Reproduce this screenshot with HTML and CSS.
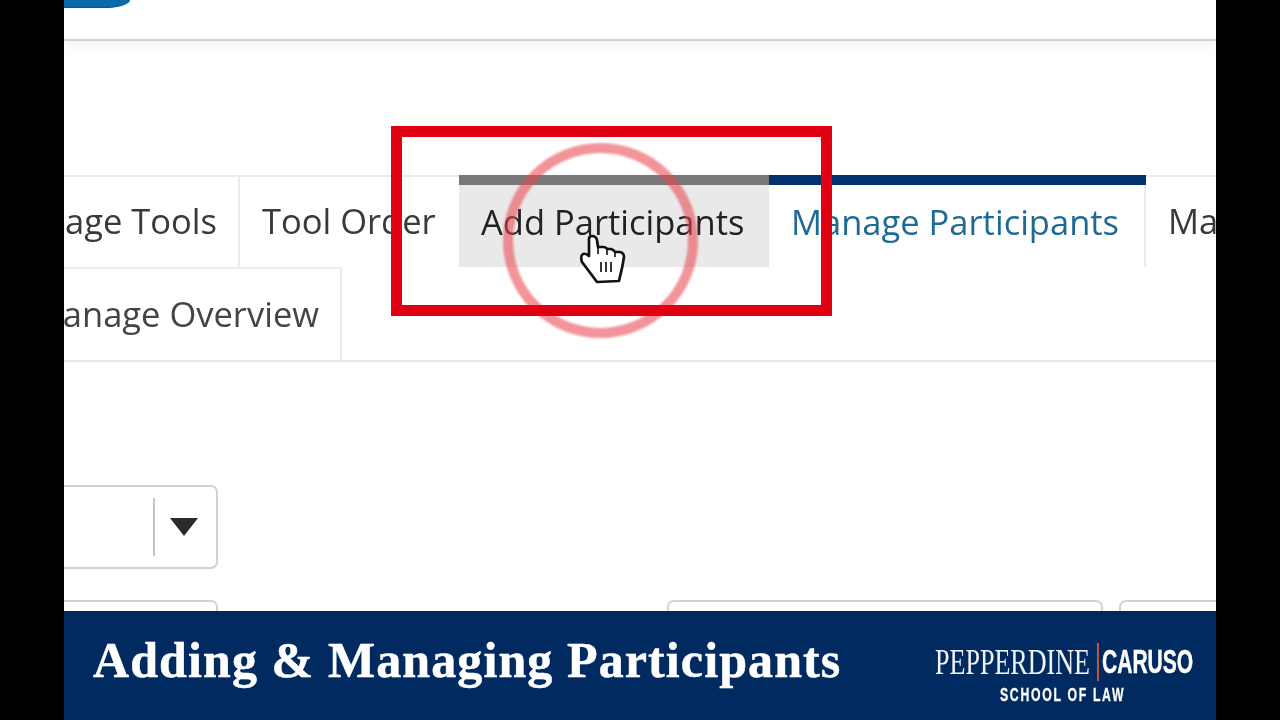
FILE: index.html
```html
<!DOCTYPE html>
<html lang="en">
<head>
<meta charset="utf-8">
<title>Adding &amp; Managing Participants</title>
<link rel="stylesheet" href="styles.css">
</head>
<body>
<div class="stage">
  <header class="topbar"><div class="pill"></div></header>
  <main class="content">
    <nav class="tabs">
      <div class="tab-row">
        <div class="tab tab-clip tab-clip-1"><span>Manage Tools</span></div>
        <div class="tab tab-order">Tool Order</div>
        <div class="tab tab-hover">Add Participants</div>
        <div class="tab tab-active">Manage Participants</div>
        <div class="tab tab-open">Ma</div>
      </div>
      <div class="tab-row tab-row-2">
        <div class="tab tab-clip tab-clip-2"><span>Manage Overview</span></div>
      </div>
    </nav>
    <div class="select"><div class="select-sep"></div><div class="caret"></div></div>
    <div class="cards">
      <div class="card card-a"></div>
      <div class="card card-b"></div>
      <div class="card card-c"></div>
    </div>
  </main>
  <footer class="banner">
    <h1 class="title">Adding &amp; Managing Participants</h1>
    <div class="logo">
      <div class="logo-top">
        <span class="logo-pep">PEPPERDINE</span>
        <span class="logo-rule"></span>
        <span class="logo-car">CARUSO</span>
      </div>
      <div class="logo-sub">SCHOOL OF LAW</div>
    </div>
  </footer>
  <div class="ring"></div>
  <div class="highlight"></div>
  <svg class="hand" viewBox="0 0 70 70" width="70" height="70" aria-hidden="true">
    <path d="M19 14Q19 11 22 11Q26 11 27 15L28 22L33 22Q36 22 37 24L41 24Q44 25 45 27L50 27Q54 28 54 32L52 43L49 56L27 57L21 49L12 37Q10 31 13 29Q16 28 19 31Z" fill="#fff" stroke="#111" stroke-width="2.7" stroke-linejoin="round"/>
    <path d="M31 37V47M36 37V47M41 37V47" stroke="#222" stroke-width="1.8" fill="none"/>
    <path d="M28 22V29M37 24V30M45 27V32" stroke="#111" stroke-width="1.6" fill="none"/>
  </svg>
</div>
</body>
</html>
```
FILE: styles.css
```css
* { box-sizing: border-box; }
html, body { margin: 0; height: 100%; background: #000; }
body { display: flex; justify-content: center; overflow: hidden; }
.stage {
  position: relative;
  width: 1152px;
  height: 720px;
  display: flex;
  flex-direction: column;
  background: #fff;
  overflow: hidden;
  font-family: "Open Sans", "Liberation Sans", sans-serif;
}
.topbar {
  flex: none;
  height: 41px;
  background: #fff;
  border-bottom: 2px solid #d4d4d4;
  box-shadow: 0 3px 10px rgba(0, 0, 0, .07);
  filter: blur(.7px);
}
.pill {
  width: 66px;
  height: 8px;
  background: #0a69a8;
  border-bottom-right-radius: 26px 8px;
  border-bottom: 1px solid #075688;
}
.content { flex: 1; min-height: 0; overflow: hidden; }
.tabs { margin-top: 134px; border-bottom: 2px solid #e8e8e8; }
.tab-row { display: flex; height: 92px; white-space: nowrap; }
.tab-row-2 { height: 93px; }
.tab {
  flex: none;
  height: 92px;
  padding: 7px 21px 0 22px;
  font-size: 34.5px;
  line-height: 74px;
  color: #3a3a3a;
  border-top: 2px solid #ebebeb;
  border-right: 2px solid #ebebeb;
  filter: blur(.7px);
}
.tab-clip { display: flex; justify-content: flex-end; padding-left: 0; }
.tab-clip-1 { width: 176px; }
.tab-clip-2 { width: 278px; height: 93px; color: #444; padding-top: 8px; }
.tab-order { width: 219px; border-right: 0; }
.tab-hover {
  width: 310px;
  background: #e9e9e9;
  color: #222;
  border-top: 10px solid #777;
  border-right: 0;
  padding-top: 0;
}
.tab-active {
  width: 377px;
  color: #1f6a94;
  border: 0;
  padding-top: 10px;
  box-shadow: inset 0 10px 0 #03316e, inset -2px 0 0 #ebebeb;
}
.tab-open { border-right: 0; }
.select {
  display: flex;
  align-items: center;
  margin: 123px 0 0 -10px;
  width: 164px;
  height: 84px;
  border: 2px solid #d2d2d2;
  border-radius: 7px;
  filter: blur(.6px);
}
.select-sep { width: 2px; height: 58px; margin-left: 97px; background: #c4c4c4; }
.caret {
  width: 0;
  height: 0;
  margin-left: 15px;
  border-style: solid;
  border-width: 18px 14.5px 0;
  border-color: #2b2b2b transparent transparent;
}
.cards { display: flex; margin: 31px -10px 0; filter: blur(.6px); }
.card {
  flex: none;
  height: 60px;
  border: 2px solid #d2d2d2;
  border-radius: 7px;
}
.card-a { width: 164px; margin-right: 449px; }
.card-b { width: 436px; margin-right: 16px; }
.card-c { width: 120px; }
.banner {
  flex: none;
  height: 109px;
  display: flex;
  justify-content: space-between;
  padding: 0 23px 0 29px;
  background: #012b60;
  color: #fff;
}
.title {
  margin: 19px 0 0;
  font-family: "Liberation Serif", serif;
  font-size: 50px;
  line-height: 60px;
  font-weight: 700;
  letter-spacing: 1.1px;
  white-space: nowrap;
  -webkit-text-stroke: .5px #fff;
}
.logo { margin-top: 32px; width: 258px; }
.logo-top { display: flex; align-items: center; height: 38px; }
.logo-pep {
  flex: none;
  width: 155px;
  font-family: "Liberation Serif", serif;
  font-size: 36px;
  line-height: 38px;
  transform: scaleX(.724);
  transform-origin: left center;
  color: #f2f3f8;
}
.logo-rule { flex: none; width: 2px; height: 38px; margin: 0 3px 0 7px; background: #b5563f; }
.logo-car {
  flex: none;
  width: 91px;
  font-family: "Liberation Sans", sans-serif;
  font-weight: 700;
  font-size: 33px;
  line-height: 38px;
  transform: scaleX(.638);
  transform-origin: left center;
  -webkit-text-stroke: .5px #fff;
}
.logo-sub {
  margin: 5px 0 0 65px;
  width: 124px;
  font-family: "Liberation Sans", sans-serif;
  font-weight: 700;
  font-size: 18px;
  line-height: 18px;
  letter-spacing: 2.5px;
  white-space: nowrap;
  transform: scaleX(.68);
  transform-origin: left center;
  -webkit-text-stroke: .3px #fff;
}
.ring {
  position: absolute;
  left: 439px;
  top: 143px;
  width: 195px;
  height: 195px;
  border: 10px solid rgba(233, 70, 80, .58);
  border-radius: 50%;
  filter: blur(.8px);
}
.highlight {
  position: absolute;
  left: 327px;
  top: 126px;
  width: 441px;
  height: 190px;
  border: 11px solid #df0012;
}
.hand {
  position: absolute;
  left: 506px;
  top: 225px;
  filter: blur(.5px);
}
```
